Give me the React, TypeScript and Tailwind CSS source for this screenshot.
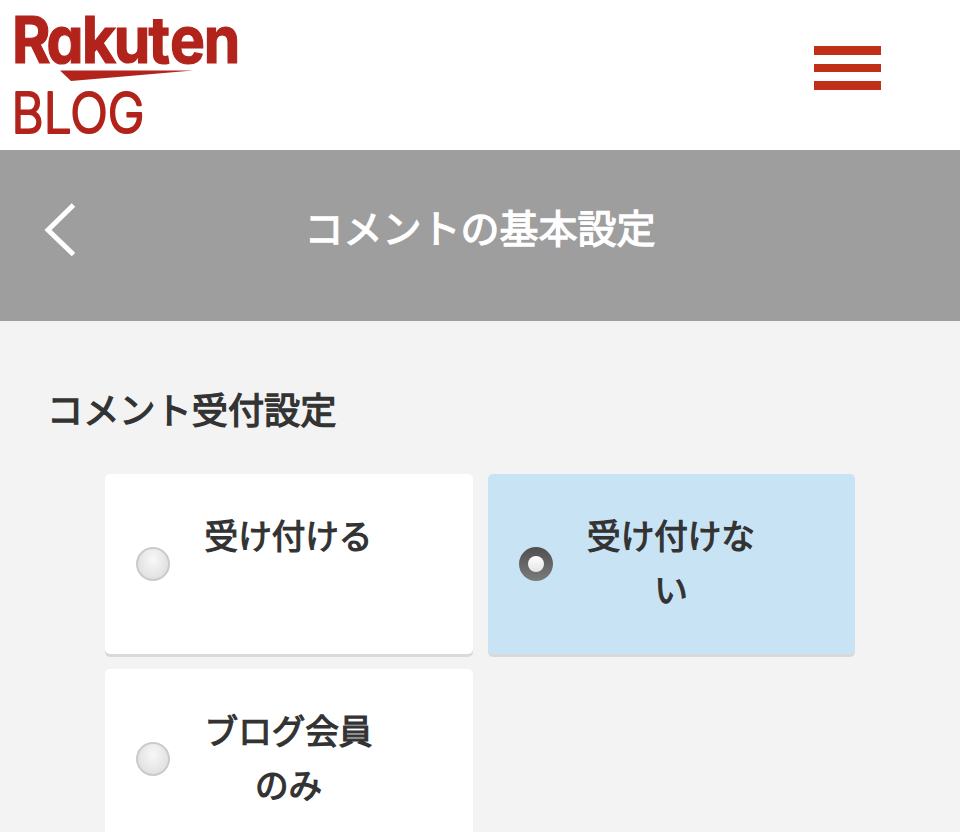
import { useState, type FC } from "react";
import clsx from "clsx";

const OPTIONS = [
  { id: "accept", label: "受け付ける" },
  { id: "reject", label: "受け付けない" },
  { id: "members", label: "ブログ会員のみ" },
];

const RakutenBlogLogo: FC = () => (
  <svg
    width="300"
    height="150"
    viewBox="0 0 300 150"
    fill="#b1231b"
    role="img"
    aria-label="Rakuten BLOG"
    className="overflow-visible"
  >
    <text
      x="13.2 51.1 90.1 124.9 163.2 186.9 223.8"
      y="63.5"
      transform="scale(0.91 1)"
      stroke="#b1231b"
      strokeWidth="1.2"
      className="font-['Inter','Liberation_Sans',sans-serif] text-[64.5px] font-bold [font-feature-settings:'cv11']"
    >
      Rakuten
    </text>
    <path d="M60 70.5H193L71 81Z" />
    <text
      x="11.5"
      y="132.5"
      textLength="133"
      lengthAdjust="spacingAndGlyphs"
      stroke="#b1231b"
      strokeWidth="2.2"
      strokeLinejoin="round"
      className="font-['Inter','Liberation_Sans',sans-serif] text-[56px] font-light"
    >
      BLOG
    </text>
  </svg>
);

const SiteHeader: FC = () => (
  <header className="flex h-[150px] items-start justify-between bg-white pr-[79px]">
    <RakutenBlogLogo />
    <button
      type="button"
      aria-label="メニュー"
      className="mt-[46px] flex w-[67px] flex-col gap-[9px]"
    >
      <span className="h-[8.5px] w-full bg-[#c02f18]" />
      <span className="h-[8.5px] w-full bg-[#c02f18]" />
      <span className="h-[8.5px] w-full bg-[#c02f18]" />
    </button>
  </header>
);

const PageTitle: FC<{ title: string }> = ({ title }) => (
  <div className="grid h-[171px] grid-cols-[120px_1fr_120px] items-start bg-[#9e9e9e] text-white">
    <button type="button" aria-label="戻る" className="mt-[50px] ml-[40px] w-10">
      <svg
        width="40"
        height="60"
        viewBox="0 0 40 60"
        fill="none"
        stroke="currentColor"
        strokeWidth="5"
      >
        <path d="M33.5 5L8 30L33.5 54.5" />
      </svg>
    </button>
    <h1 className="mt-[46px] text-center text-[39px] leading-[60px] font-normal [-webkit-text-stroke:1.3px_currentColor]">
      {title}
    </h1>
  </div>
);

interface OptionCardProps {
  label: string;
  checked: boolean;
  onSelect: () => void;
}

const OptionCard: FC<OptionCardProps> = ({ label, checked, onSelect }) => (
  <button
    type="button"
    role="radio"
    aria-checked={checked}
    onClick={onSelect}
    className={clsx(
      "flex h-[180px] items-center rounded-[5px] pl-[31px] shadow-[0_3px_0_#d8d9da]",
      checked ? "bg-[#c8e4f4]" : "bg-white",
    )}
  >
    <span
      className={clsx(
        "flex size-[34px] shrink-0 items-center justify-center rounded-full",
        checked
          ? "bg-linear-to-b from-[#505050] to-[#7b7b7b]"
          : "border-2 border-[#cbcbcb] bg-radial-[at_50%_35%] from-[#f8f8f8] to-[#d9d9d9]",
      )}
    >
      {checked && (
        <span className="size-4 rounded-full bg-linear-to-b from-white to-[#e4e4e4]" />
      )}
    </span>
    <span className="-mt-[5px] ml-[33px] h-[108px] w-[171px] text-center text-[33.6px] leading-[54px] font-normal [-webkit-text-stroke:1.2px_currentColor]">
      {label}
    </span>
  </button>
);

export default function App() {
  const [selected, setSelected] = useState("reject");

  return (
    <div className="h-[832px] w-[960px] overflow-hidden bg-[#f3f3f3] font-['Noto_Sans_CJK_JP',sans-serif] text-[#333]">
      <SiteHeader />
      <PageTitle title="コメントの基本設定" />
      <main className="pt-[57px]">
        <h2 className="pl-[47px] text-[36.2px] leading-[60px] font-normal [-webkit-text-stroke:1.3px_currentColor]">
          コメント受付設定
        </h2>
        <div
          role="radiogroup"
          aria-label="コメント受付設定"
          className="mx-[105px] mt-[36px] grid grid-cols-2 gap-[15px]"
        >
          {OPTIONS.map((option) => (
            <OptionCard
              key={option.id}
              label={option.label}
              checked={option.id === selected}
              onSelect={() => setSelected(option.id)}
            />
          ))}
        </div>
      </main>
    </div>
  );
}
